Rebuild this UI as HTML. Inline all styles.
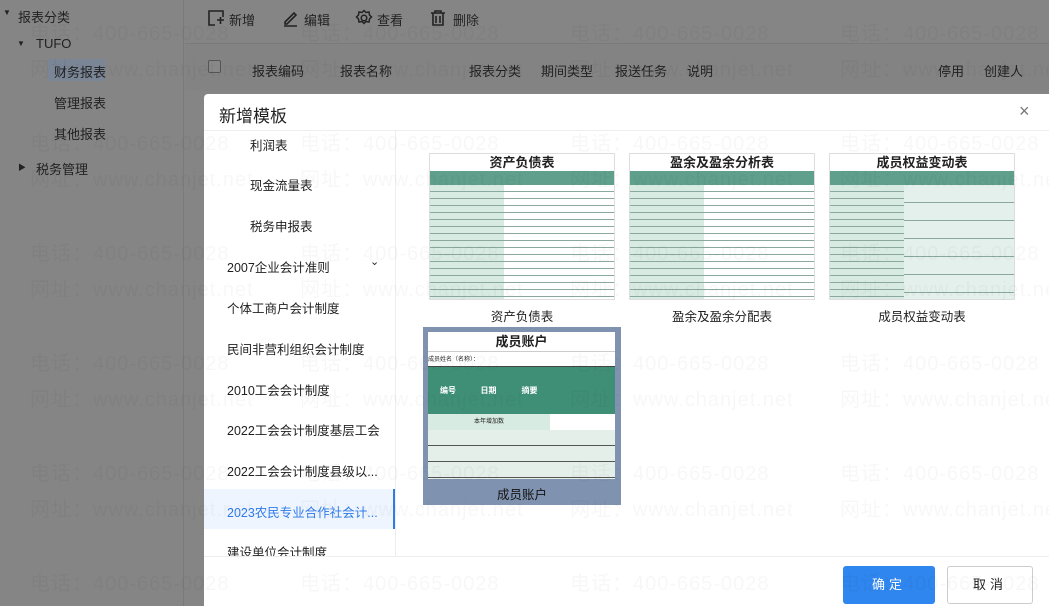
<!DOCTYPE html>
<html><head><meta charset="utf-8"><style>
*{box-sizing:border-box;margin:0;padding:0}
html{width:1049px;height:606px;overflow:hidden}
body{width:1049px;height:606px;overflow:hidden;position:relative;background:#858585;font-family:"Liberation Sans","Noto Sans CJK SC",sans-serif;color:#1f1f1f;font-size:13px}
.abs{position:absolute}
.side{left:0;top:0;width:184px;height:606px;background:#858585;border-right:1px solid #7a7a7a}
.side div{position:absolute;font-size:13px;color:#222}
.tb span{position:absolute;top:10px;font-size:13px;color:#222}
.hdr{left:185px;top:43px;width:864px;height:48px;background:#838383;border-top:1px solid #7a7a7a}
.hdr span{position:absolute;top:17px;font-size:13px;color:#222}
.modal{left:204px;top:94px;width:845px;height:512px;background:#fff;border-radius:4px 0 0 0;overflow:hidden}
.mh{position:absolute;left:0;top:0;width:845px;height:37px;border-bottom:1px solid #eee}
.menu{position:absolute;left:0;top:37px;width:192px;height:425px;border-right:1px solid #eee;overflow:hidden}
.menu div{position:absolute;font-size:12.5px;color:#1f1f1f;white-space:nowrap}
.foot{position:absolute;left:0;top:462px;width:845px;height:50px;border-top:1px solid #eee}
.card{position:absolute;width:186px;height:147px;border:1px solid #ddd;background:#fff;overflow:hidden}
.card .t{height:17px;text-align:center;font-size:13px;font-weight:bold;line-height:17px;color:#222}
.card .h{height:14px;background:#5f9f8c}
.card .b{height:116px;background:repeating-linear-gradient(#fff 0 6px,#8aa89e 6px 7px),#fff;position:relative}
.card .b:before{content:"";position:absolute;left:0;top:0;width:40%;height:100%;background:repeating-linear-gradient(#d8ebe3 0 6px,#8aa89e 6px 7px)}
.lab{position:absolute;font-size:12.5px;color:#1f1f1f;text-align:center;width:186px}
.wm{position:absolute;font-size:20px;color:rgba(0,0,0,0.03);white-space:nowrap;letter-spacing:1px;pointer-events:none}
</style></head><body>
<div class="abs side">
<div style="left:3px;top:8px;font-size:8px">▼</div><div style="left:18px;top:7px">报表分类</div>
<div style="left:17px;top:39px;font-size:8px">▼</div><div style="left:36px;top:36px">TUFO</div>
<div style="left:48px;top:59px;width:57px;height:22px;background:#7a8596;border-radius:2px"></div>
<div style="left:54px;top:62px">财务报表</div>
<div style="left:54px;top:93px">管理报表</div>
<div style="left:54px;top:124px">其他报表</div>
<div style="left:18px;top:162px;font-size:8px">▶</div><div style="left:36px;top:159px">税务管理</div>
</div>
<div class="abs tb" style="left:185px;top:0;width:864px;height:43px">
<svg class="abs" style="left:22px;top:9px" width="18" height="18" viewBox="0 0 18 18" fill="none" stroke="#222" stroke-width="1.6"><path d="M8 2H2v14h6M8 2h8v6M10 11h7M13.5 8v7"/></svg><span style="left:44px">新增</span>
<svg class="abs" style="left:97px;top:9px" width="18" height="18" viewBox="0 0 18 18" fill="none" stroke="#222" stroke-width="1.6"><path d="M3 13l9-9 2 2-9 9H3zM2 17h13"/></svg><span style="left:119px">编辑</span>
<svg class="abs" style="left:170px;top:9px" width="18" height="18" viewBox="0 0 18 18" fill="none" stroke="#222" stroke-width="1.5"><circle cx="9" cy="9" r="2.8"/><path d="M9 1.5l2 2 3-.5.5 3 2 2-2 2-.5 3-3-.5-2 2-2-2-3 .5-.5-3-2-2 2-2 .5-3 3 .5z"/></svg><span style="left:192px">查看</span>
<svg class="abs" style="left:244px;top:9px" width="18" height="18" viewBox="0 0 18 18" fill="none" stroke="#222" stroke-width="1.6"><path d="M2 4h14M6 4V2h6v2M4 4v12h10V4M7 7v7M11 7v7"/></svg><span style="left:268px">删除</span>
</div>
<div class="abs hdr">
<div class="abs" style="left:23px;top:16px;width:13px;height:13px;border:1px solid #555;background:#888;border-radius:2px"></div>
<span style="left:67px">报表编码</span><span style="left:155px">报表名称</span><span style="left:284px">报表分类</span><span style="left:356px">期间类型</span><span style="left:430px">报送任务</span><span style="left:502px">说明</span><span style="left:753px">停用</span><span style="left:799px">创建人</span>
</div>
<div class="abs modal">
<div class="mh"><div class="abs" style="left:15px;top:8px;font-size:17px;color:#222">新增模板</div>
<div class="abs" style="left:815px;top:7px;font-size:18px;color:#777">×</div></div>
<div class="menu">
<div style="left:46px;top:4px">利润表</div>
<div style="left:46px;top:44px">现金流量表</div>
<div style="left:46px;top:85px">税务申报表</div>
<div style="left:23px;top:126px">2007企业会计准则</div>
<div style="left:166px;top:124px;font-size:11px">⌄</div>
<div style="left:23px;top:167px">个体工商户会计制度</div>
<div style="left:23px;top:208px">民间非营利组织会计制度</div>
<div style="left:23px;top:249px">2010工会会计制度</div>
<div style="left:23px;top:289px">2022工会会计制度基层工会</div>
<div style="left:23px;top:330px">2022工会会计制度县级以...</div>
<div style="left:0;top:358px;width:192px;height:40px;background:#eef5ff;border-right:3px solid #2f7be8"></div>
<div style="left:23px;top:371px;color:#2f7be8">2023农民专业合作社会计...</div>
<div style="left:23px;top:411px">建设单位会计制度</div>
</div>
<div class="card" style="left:225px;top:59px"><div class="t">资产负债表</div><div class="h"></div><div class="b"></div></div>
<div class="card" style="left:425px;top:59px"><div class="t">盈余及盈余分析表</div><div class="h"></div><div class="b"></div></div>
<div class="card" style="left:625px;top:59px"><div class="t">成员权益变动表</div><div class="h"></div><div class="b" style="background:repeating-linear-gradient(#e4f0eb 0 17px,#8aa89e 17px 18px)"></div></div>
<div class="lab" style="left:225px;top:212px">资产负债表</div>
<div class="lab" style="left:425px;top:212px">盈余及盈余分配表</div>
<div class="lab" style="left:625px;top:212px">成员权益变动表</div>
<div class="abs" style="left:219px;top:233px;width:198px;height:178px;background:#7f93b0">
<div class="abs" style="left:5px;top:5px;width:187px;height:147px;background:#fff;overflow:hidden">
<div style="height:19px;text-align:center;font-size:13px;font-weight:bold;line-height:19px">成员账户</div>
<div style="height:16px;font-size:6px;line-height:16px;border-top:1px solid #ccc;border-bottom:1px solid #444">成员姓名（名称）：</div>
<div style="height:47px;background:#3f8f77;display:flex;color:#fff;font-size:8px;font-weight:bold;align-items:center"><span style="width:40px;text-align:center">编号</span><span style="width:41px;text-align:center">日期</span><span style="width:41px;text-align:center">摘要</span></div>
<div style="height:16px;background:#d8ebe3;font-size:6px;text-align:center;line-height:16px;width:122px">本年增加数</div>
<div style="height:50px;background:repeating-linear-gradient(#e4efea 0 15px,#555 15px 16px)"></div>
</div>
<div class="abs" style="left:0;top:157px;width:198px;text-align:center;font-size:12.5px;color:#111">成员账户</div>
</div>
<div class="foot">
<div class="abs" style="left:639px;top:9px;width:92px;height:38px;background:#2f86ee;border-radius:3px;color:#fff;text-align:center;line-height:38px;font-size:13px;letter-spacing:4px">确定</div>
<div class="abs" style="left:743px;top:9px;width:86px;height:38px;border:1px solid #ccc;border-radius:3px;text-align:center;line-height:36px;font-size:13px;letter-spacing:4px">取消</div>
</div>
</div>
<div id="w" class="abs" style="left:0;top:0;width:1049px;height:606px;overflow:hidden"></div>
<script>
var h='';var xs=[30,300,570,840];
for(var r=0;r<6;r++){for(var c=0;c<4;c++){h+='<div class="wm" style="left:'+xs[c]+'px;top:'+(17+r*110)+'px">电话：400-665-0028</div><div class="wm" style="left:'+xs[c]+'px;top:'+(53+r*110)+'px">网址：www.chanjet.net</div>';}}
document.getElementById('w').innerHTML=h;
</script>
</body></html>
